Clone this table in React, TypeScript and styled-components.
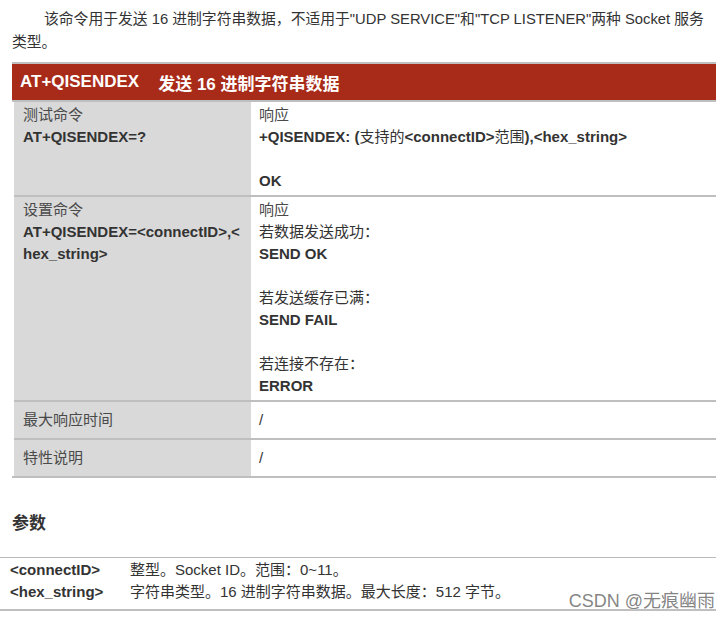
import React from "react";
import styled, { createGlobalStyle } from "styled-components";

const GlobalStyle = createGlobalStyle`
  html, body {
    margin: 0;
    padding: 0;
    background: #ffffff;
  }
  body {
    font-family: "Liberation Sans", "Noto Sans CJK SC", sans-serif;
    color: #333333;
  }
`;

const Page = styled.div`
  width: 728px;
  box-sizing: border-box;
  padding: 8px 12px 0 12px;
`;

const Intro = styled.p`
  margin: 0;
  font-size: 14.8px;
  line-height: 23px;
  text-indent: 32px;
  white-space: nowrap;
  color: #333333;
`;

const CmdTable = styled.section`
  margin-top: 8px;
  border-top: 2px solid #bfbfbf;
  border-bottom: 2px solid #bfbfbf;
`;

const Header = styled.div`
  height: 36px;
  display: flex;
  align-items: center;
  gap: 19px;
  padding-left: 8px;
  background: #a82a18;
  color: #ffffff;
  font-size: 17px;
  font-weight: bold;
  border-bottom: 2px solid #bfbfbf;
`;

const Row = styled.div`
  display: grid;
  grid-template-columns: 237px 1fr;
  margin-left: 2px;
  &:not(:last-child) {
    border-bottom: 2px solid #bfbfbf;
  }
`;

const Cell = styled.div<{ $side: "left" | "right"; $single?: boolean }>`
  background: ${(p) => (p.$side === "left" ? "#d9d9d9" : "#ffffff")};
  padding: ${(p) => (p.$single ? "7px" : "2px")} ${(p) => (p.$side === "left" ? "9px" : "8px")}
    ${(p) => (p.$single ? "7px" : "3px")};
  font-size: 15px;
`;

const Line = styled.div`
  line-height: 22px;
  min-height: 22px;
  white-space: nowrap;
`;

const Label = styled(Line)`
  color: #4a4a4a;
`;

const Code = styled(Line)`
  font-weight: bold;
  color: #333333;
`;

const Plain = styled.span`
  font-weight: normal;
`;

const Heading = styled.h3`
  margin: 34px 0 0 0;
  font-size: 17px;
  line-height: 24px;
  font-weight: bold;
  color: #333333;
`;

const ParamTable = styled.div`
  position: relative;
  margin: 21px 0 0 -12px;
  border-top: 1px solid #bbbbbb;
  border-bottom: 2px solid #bfbfbf;
  padding: 1px 0 6px 10px;
  font-size: 15px;
`;

const ParamRow = styled.div`
  display: grid;
  grid-template-columns: 120px 1fr;
  line-height: 22px;
`;

const ParamName = styled.span`
  font-weight: bold;
  color: #333333;
`;

const ParamDesc = styled.span`
  color: #333333;
`;

const Watermark = styled.div`
  position: absolute;
  right: 1px;
  bottom: -3px;
  font-size: 18px;
  line-height: 22px;
  color: rgba(110, 110, 110, 0.85);
  text-shadow: 0 0 1px #ffffff, 0 0 1px #ffffff;
  white-space: nowrap;
`;

export default function App() {
  return (
    <>
      <GlobalStyle />
      <Page>
        <Intro>
          该命令用于发送 16 进制字符串数据，不适用于"UDP SERVICE"和"TCP LISTENER"两种 Socket 服务
          <br />
          类型。
        </Intro>

        <CmdTable>
          <Header>
            <span>AT+QISENDEX</span>
            <span>发送 16 进制字符串数据</span>
          </Header>

          <Row>
            <Cell $side="left">
              <Label>测试命令</Label>
              <Code>AT+QISENDEX=?</Code>
            </Cell>
            <Cell $side="right">
              <Label>响应</Label>
              <Code>
                +QISENDEX: (<Plain>支持的</Plain>&lt;connectID&gt;<Plain>范围</Plain>),&lt;hex_string&gt;
              </Code>
              <Line />
              <Code>OK</Code>
            </Cell>
          </Row>

          <Row>
            <Cell $side="left">
              <Label>设置命令</Label>
              <Code>AT+QISENDEX=&lt;connectID&gt;,&lt;</Code>
              <Code>hex_string&gt;</Code>
            </Cell>
            <Cell $side="right">
              <Label>响应</Label>
              <Line>若数据发送成功：</Line>
              <Code>SEND OK</Code>
              <Line />
              <Line>若发送缓存已满：</Line>
              <Code>SEND FAIL</Code>
              <Line />
              <Line>若连接不存在：</Line>
              <Code>ERROR</Code>
            </Cell>
          </Row>

          <Row>
            <Cell $side="left" $single>
              <Label>最大响应时间</Label>
            </Cell>
            <Cell $side="right" $single>
              <Line>/</Line>
            </Cell>
          </Row>

          <Row>
            <Cell $side="left" $single>
              <Label>特性说明</Label>
            </Cell>
            <Cell $side="right" $single>
              <Line>/</Line>
            </Cell>
          </Row>
        </CmdTable>

        <Heading>参数</Heading>

        <ParamTable>
          <ParamRow>
            <ParamName>&lt;connectID&gt;</ParamName>
            <ParamDesc>整型。Socket ID。范围：0~11。</ParamDesc>
          </ParamRow>
          <ParamRow>
            <ParamName>&lt;hex_string&gt;</ParamName>
            <ParamDesc>字符串类型。16 进制字符串数据。最大长度：512 字节。</ParamDesc>
          </ParamRow>
          <Watermark>CSDN @无痕幽雨</Watermark>
        </ParamTable>
      </Page>
    </>
  );
}
